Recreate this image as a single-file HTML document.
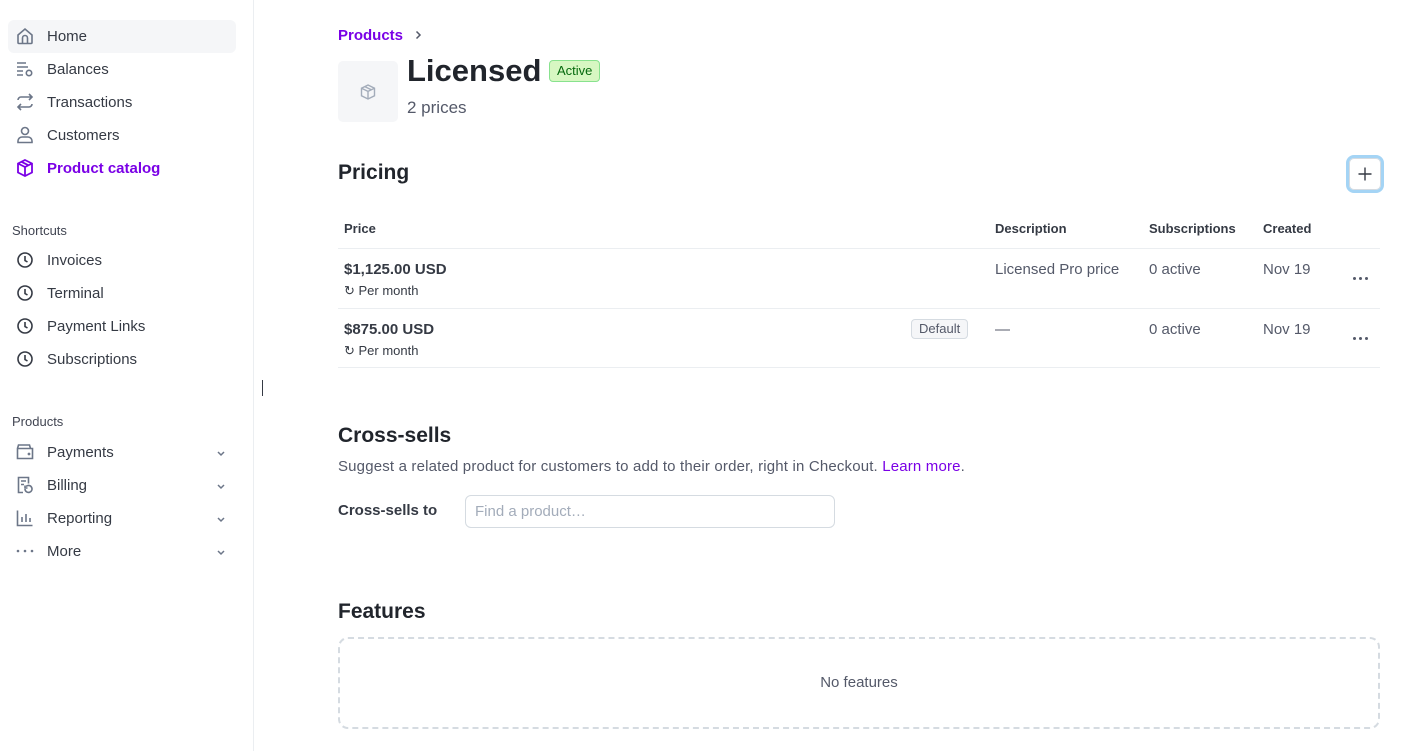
<!DOCTYPE html>
<html><head><meta charset="utf-8"><style>
*{box-sizing:border-box;margin:0;padding:0}
body{width:1401px;height:751px;overflow:hidden;background:#fff;font-family:"Liberation Sans",sans-serif;color:#353a44;position:relative}
.sb{position:absolute;left:0;top:0;width:254px;height:751px;border-right:1px solid #ebeef1}
.it{position:absolute;left:8px;width:228px;height:33px;display:flex;align-items:center;font-size:15px;color:#353a44}
.it svg{position:absolute;left:8px;top:7px}
.it span{position:absolute;left:39px;top:8px}
.lbl{position:absolute;left:12px;font-size:13px;color:#414552}
.ab{position:absolute}
.sec{position:absolute;left:338px;font-size:21px;font-weight:bold;color:#21252c}
.row{position:absolute;left:338px;width:1042px;border-top:1px solid #ebeef1}
.t{position:absolute;font-size:15px;color:#545969}
.dots{position:absolute;left:1353px;width:16px;height:4px}
.dots i{position:absolute;top:0;width:3px;height:3px;border-radius:50%;background:#545969}
</style></head><body>
<div class="sb">
<div class="it" style="top:20px;background:#f5f6f8;border-radius:6px"><svg width="18" height="18" viewBox="0 0 18 18" fill="none" stroke="#6c7688" stroke-width="1.6"><path d="M2 8l7-6 7 6v7.5a1 1 0 0 1-1 1H3a1 1 0 0 1-1-1z"/><path d="M6.5 16.5V11a2.5 2.5 0 0 1 5 0v5.5"/></svg><span>Home</span></div>
<div class="it" style="top:53px"><svg width="18" height="18" viewBox="0 0 18 18" fill="none" stroke="#6c7688" stroke-width="1.6"><path d="M1 3h9M1 7h11M1 11h6M1 15h6"/><circle cx="13" cy="13" r="2.7"/></svg><span>Balances</span></div>
<div class="it" style="top:86px"><svg width="18" height="18" viewBox="0 0 18 18" fill="none" stroke="#6c7688" stroke-width="1.6"><path d="M2 7a3 3 0 0 1 3-3h11M13 1l3 3-3 3M16 11a3 3 0 0 1-3 3H2M5 11l-3 3 3 3"/></svg><span>Transactions</span></div>
<div class="it" style="top:119px"><svg width="18" height="18" viewBox="0 0 18 18" fill="none" stroke="#6c7688" stroke-width="1.6"><circle cx="9" cy="5" r="3.5"/><path d="M2 16.5v-1.5a4 4 0 0 1 4-4h6a4 4 0 0 1 4 4v1.5z"/></svg><span>Customers</span></div>
<div class="it" style="top:152px;color:#7a00e6;font-weight:bold"><svg width="18" height="18" viewBox="0 0 18 18" fill="none" stroke="#7a00e6" stroke-width="1.8"><path d="M9 1l7 3.5v9L9 17l-7-3.5v-9z"/><path d="M2 4.5L9 8l7-3.5M9 8v9M5.5 2.8l7 3.5"/></svg><span>Product catalog</span></div>
<div class="lbl" style="top:223px">Shortcuts</div>
<div class="it" style="top:244px"><svg width="18" height="18" viewBox="0 0 18 18" fill="none" stroke="#353a44" stroke-width="1.6"><circle cx="9" cy="9" r="7"/><path d="M9 5v4.5l2.5 1.5"/></svg><span>Invoices</span></div>
<div class="it" style="top:277px"><svg width="18" height="18" viewBox="0 0 18 18" fill="none" stroke="#353a44" stroke-width="1.6"><circle cx="9" cy="9" r="7"/><path d="M9 5v4.5l2.5 1.5"/></svg><span>Terminal</span></div>
<div class="it" style="top:310px"><svg width="18" height="18" viewBox="0 0 18 18" fill="none" stroke="#353a44" stroke-width="1.6"><circle cx="9" cy="9" r="7"/><path d="M9 5v4.5l2.5 1.5"/></svg><span>Payment Links</span></div>
<div class="it" style="top:343px"><svg width="18" height="18" viewBox="0 0 18 18" fill="none" stroke="#353a44" stroke-width="1.6"><circle cx="9" cy="9" r="7"/><path d="M9 5v4.5l2.5 1.5"/></svg><span>Subscriptions</span></div>
<div class="lbl" style="top:414px">Products</div>
<div class="it" style="top:436px"><svg width="18" height="18" viewBox="0 0 18 18" fill="none" stroke="#6c7688" stroke-width="1.6"><path d="M1.5 5.5h15v10h-15zM1.5 5.5l1-3.5h11l1 3.5"/><circle cx="13" cy="11" r=".6"/></svg><span>Payments</span><svg width="10" height="10" viewBox="0 0 10 10" fill="none" stroke="#6c7688" stroke-width="1.5" style="left:208px;top:12px"><path d="M2 4l3 3 3-3"/></svg></div>
<div class="it" style="top:469px"><svg width="18" height="18" viewBox="0 0 18 18" fill="none" stroke="#6c7688" stroke-width="1.6"><path d="M7 16.5H2.5v-15h10v6M5 5h5M5 8.5h3"/><path d="M9 13a3.5 3.5 0 1 0 1-2.5M9 9.5V12h2.5"/></svg><span>Billing</span><svg width="10" height="10" viewBox="0 0 10 10" fill="none" stroke="#6c7688" stroke-width="1.5" style="left:208px;top:12px"><path d="M2 4l3 3 3-3"/></svg></div>
<div class="it" style="top:502px"><svg width="18" height="18" viewBox="0 0 18 18" fill="none" stroke="#6c7688" stroke-width="1.6"><path d="M1.5 1.5v15h15M6 13V8M10 13V5M14 13V9"/></svg><span>Reporting</span><svg width="10" height="10" viewBox="0 0 10 10" fill="none" stroke="#6c7688" stroke-width="1.5" style="left:208px;top:12px"><path d="M2 4l3 3 3-3"/></svg></div>
<div class="it" style="top:535px"><svg width="18" height="18" viewBox="0 0 18 18" fill="#6c7688"><circle cx="2" cy="9" r="1.3"/><circle cx="9" cy="9" r="1.3"/><circle cx="16" cy="9" r="1.3"/></svg><span>More</span><svg width="10" height="10" viewBox="0 0 10 10" fill="none" stroke="#6c7688" stroke-width="1.5" style="left:208px;top:12px"><path d="M2 4l3 3 3-3"/></svg></div>
</div>
<div class="ab" style="left:262px;top:380px;width:1px;height:16px;background:#353a44"></div>

<div class="ab" style="left:338px;top:27px;font-size:15px;font-weight:bold;color:#7a00e6">Products</div>
<svg class="ab" style="left:413px;top:30px" width="10" height="10" viewBox="0 0 10 10" fill="none" stroke="#545969" stroke-width="1.5"><path d="M3.5 1.5l3.5 3.5-3.5 3.5"/></svg>
<div class="ab" style="left:338px;top:61px;width:60px;height:61px;background:#f5f6f8;border-radius:5px"></div>
<svg class="ab" style="left:359px;top:83px" width="18" height="18" viewBox="0 0 18 18" fill="none" stroke="#a3acba" stroke-width="1.4"><path d="M9 2l6.5 3.2v7.6L9 16l-6.5-3.2V5.2z"/><path d="M2.5 5.2L9 8.4l6.5-3.2M9 8.4V16M5.8 3.6l6.5 3.2"/></svg>
<div class="ab" style="left:407px;top:53px;font-size:31px;font-weight:bold;color:#21252c">Licensed</div>
<div class="ab" style="left:549px;top:60px;height:22px;padding:0 7px;border:1px solid #88e28e;background:#d7f7c2;border-radius:4px;font-size:13px;line-height:20px;color:#05690d">Active</div>
<div class="ab" style="left:407px;top:98px;font-size:17px;color:#545969">2 prices</div>

<div class="sec" style="top:161px">Pricing</div>
<div class="ab" style="left:1346px;top:155px;width:38px;height:38px;border:3px solid #a4d4f5;border-radius:8px;background:#fff;box-shadow:inset 0 0 0 1px #d5dbe1"></div>
<svg class="ab" style="left:1358px;top:167px" width="14" height="14" viewBox="0 0 14 14" stroke="#353a44" stroke-width="1.4"><path d="M7 0.5v13M0.5 7h13"/></svg>
<div class="ab" style="left:344px;top:221px;font-size:13px;font-weight:bold">Price</div>
<div class="ab" style="left:995px;top:221px;font-size:13px;font-weight:bold">Description</div>
<div class="ab" style="left:1149px;top:221px;font-size:13px;font-weight:bold">Subscriptions</div>
<div class="ab" style="left:1263px;top:221px;font-size:13px;font-weight:bold">Created</div>
<div class="row" style="top:248px"></div>
<div class="row" style="top:308px"></div>
<div class="row" style="top:367px"></div>
<div class="ab" style="left:344px;top:261px;font-size:15px;font-weight:bold;color:#353a44">$1,125.00 USD</div>
<div class="ab" style="left:344px;top:283px;font-size:13px;color:#353a44">↻ Per month</div>
<div class="t" style="left:995px;top:261px">Licensed Pro price</div>
<div class="t" style="left:1149px;top:261px">0 active</div>
<div class="t" style="left:1263px;top:261px">Nov 19</div>
<div class="dots" style="top:277px"><i style="left:0"></i><i style="left:6px"></i><i style="left:12px"></i></div>
<div class="ab" style="left:344px;top:321px;font-size:15px;font-weight:bold;color:#353a44">$875.00 USD</div>
<div class="ab" style="left:344px;top:343px;font-size:13px;color:#353a44">↻ Per month</div>
<div class="ab" style="left:911px;top:319px;height:20px;padding:0 7px;border:1px solid #d5dbe1;background:#f5f6f8;border-radius:4px;font-size:13px;line-height:18px;color:#545969">Default</div>
<div class="t" style="left:995px;top:321px">—</div>
<div class="t" style="left:1149px;top:321px">0 active</div>
<div class="t" style="left:1263px;top:321px">Nov 19</div>
<div class="dots" style="top:337px"><i style="left:0"></i><i style="left:6px"></i><i style="left:12px"></i></div>

<div class="sec" style="top:424px">Cross-sells</div>
<div class="ab" style="left:338px;top:458px;font-size:15px;color:#545969;letter-spacing:0.17px">Suggest a related product for customers to add to their order, right in Checkout. <span style="color:#7a00e6">Learn more</span>.</div>
<div class="ab" style="left:338px;top:502px;font-size:15px;font-weight:bold;color:#353a44">Cross-sells to</div>
<div class="ab" style="left:465px;top:495px;width:370px;height:33px;border:1px solid #d5dbe1;border-radius:6px;padding:7px 9px;font-size:15px;color:#a3acba">Find a product…</div>

<div class="sec" style="top:600px">Features</div>
<div class="ab" style="left:338px;top:637px;width:1042px;height:92px;border:2px dashed #d5dbe1;border-radius:10px"></div>
<div class="ab" style="left:338px;top:674px;width:1042px;text-align:center;font-size:15px;color:#545969">No features</div>
</body></html>
